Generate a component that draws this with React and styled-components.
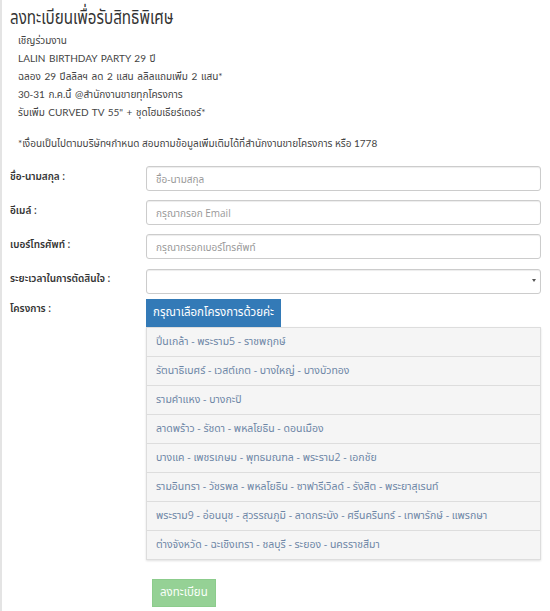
import React, { useState } from 'react';
import styled, { createGlobalStyle } from 'styled-components';

const GlobalStyle = createGlobalStyle`
  html, body {
    margin: 0;
    padding: 0;
    background: #fff;
  }
  body {
    font-family: "Open Sans", "Noto Sans Thai", "Noto Sans", sans-serif;
    color: #333;
  }
  * { box-sizing: border-box; }
`;

const projects = [
  'ปิ่นเกล้า - พระราม5 - ราชพฤกษ์',
  'รัตนาธิเบศร์ - เวสต์เกต - บางใหญ่ - บางบัวทอง',
  'รามคำแหง - บางกะปิ',
  'ลาดพร้าว - รัชดา - พหลโยธิน - ดอนเมือง',
  'บางแค - เพชรเกษม - พุทธมณฑล - พระราม2 - เอกชัย',
  'รามอินทรา - วัชรพล - พหลโยธิน - ซาฟารีเวิลด์ - รังสิต - พระยาสุเรนท์',
  'พระราม9 - อ่อนนุช - สุวรรณภูมิ - ลาดกระบัง - ศรีนครินทร์ - เทพารักษ์ - แพรกษา',
  'ต่างจังหวัด - ฉะเชิงเทรา - ชลบุรี - ระยอง - นครราชสีมา',
];

const Page = styled.div`
  min-height: 611px;
  border-left: 2px solid #e4e4e4;
  padding: 3px 9px 0 8px;
`;

const Title = styled.h1`
  margin: 0;
  font-size: 20px;
  font-weight: 400;
  line-height: 28px;
  color: #333;
  white-space: nowrap;
  transform: scaleX(0.76);
  transform-origin: left center;
`;

const Info = styled.div`
  padding: 0 0 0 8px;
  font-family: "Lato", "Noto Sans Thai", sans-serif;
  font-size: 10px;
  color: #444;
`;

const Line = styled.p`
  margin: 0;
  line-height: 18px;
  word-spacing: 1px;
`;

const Note = styled(Line)`
  margin-top: 13px;
  word-spacing: 0;
`;

const Form = styled.form`
  margin-top: 14px;
`;

const Row = styled.div`
  display: grid;
  grid-template-columns: 136px 395px;
  align-items: start;
  margin-bottom: ${(p) => p.$gap ?? 9}px;
`;

const Label = styled.label`
  font-size: 10px;
  font-weight: 600;
  color: #333;
  padding-top: ${(p) => p.$top || 3}px;
`;

const Input = styled.input`
  width: 100%;
  height: 25px;
  border: 1px solid #ccc;
  border-radius: 3px;
  box-shadow: inset 0 1px 1px rgba(0, 0, 0, 0.075);
  padding: 0 9px;
  font-family: inherit;
  font-size: 10px;
  color: #555;
  outline: none;
  &::placeholder {
    color: #999;
  }
`;

const SelectWrap = styled.div`
  position: relative;
  &::after {
    content: '';
    position: absolute;
    right: 5px;
    top: 11px;
    border-left: 2px solid transparent;
    border-right: 2px solid transparent;
    border-top: 3px solid #555;
  }
`;

const Select = styled.select`
  width: 100%;
  height: 25px;
  border: 1px solid #ccc;
  border-radius: 3px;
  box-shadow: inset 0 1px 1px rgba(0, 0, 0, 0.075);
  background: #fff;
  appearance: none;
  padding: 0 9px;
  font-family: inherit;
  font-size: 10px;
  outline: none;
`;

const PickButton = styled.button`
  display: block;
  height: 28px;
  padding: 0 7px;
  border: 0;
  border-radius: 0;
  background: #337ab7;
  color: #fff;
  font-family: inherit;
  font-size: 11.5px;
  cursor: pointer;
`;

const List = styled.ul`
  list-style: none;
  margin: 0;
  padding: 0;
  box-shadow: 0 1px 2px rgba(0, 0, 0, 0.12);
`;

const Item = styled.li`
  height: 30px;
  display: flex;
  align-items: center;
  padding: 0 9px;
  background: ${(p) => (p.$active ? '#e6eef7' : '#f5f5f5')};
  border: 1px solid #ddd;
  margin-bottom: -1px;
  font-size: 10.5px;
  color: #6d86a6;
  cursor: pointer;
  &:last-child {
    margin-bottom: 0;
  }
`;

const Submit = styled.button`
  display: block;
  margin: 19px 0 0 142px;
  height: 28px;
  padding: 0 7px;
  border: 1px solid #8ccc8c;
  border-radius: 0;
  background: #95d195;
  color: #fafffa;
  font-family: inherit;
  font-size: 11.5px;
`;

export default function App() {
  const [picked, setPicked] = useState(null);

  return (
    <>
      <GlobalStyle />
      <Page>
        <Title>ลงทะเบียนเพื่อรับสิทธิพิเศษ</Title>
        <Info>
          <Line>เชิญร่วมงาน</Line>
          <Line>LALIN BIRTHDAY PARTY 29 ปี</Line>
          <Line>ฉลอง 29 ปีลลิลฯ ลด 2 แสน ลลิลแถมเพิ่ม 2 แสน*</Line>
          <Line>30-31 ก.ค.นี้ @สำนักงานขายทุกโครงการ</Line>
          <Line>รับเพิ่ม CURVED TV 55" + ชุดโฮมเธียร์เตอร์*</Line>
          <Note>*เงื่อนเป็นไปตามบริษัทฯกำหนด สอบถามข้อมูลเพิ่มเติมได้ที่สำนักงานขายโครงการ หรือ 1778</Note>
        </Info>

        <Form onSubmit={(e) => e.preventDefault()}>
          <Row>
            <Label htmlFor="name">ชื่อ-นามสกุล :</Label>
            <Input id="name" placeholder="ชื่อ-นามสกุล" />
          </Row>
          <Row>
            <Label htmlFor="email">อีเมล์ :</Label>
            <Input id="email" placeholder="กรุณากรอก Email" />
          </Row>
          <Row>
            <Label htmlFor="tel">เบอร์โทรศัพท์ :</Label>
            <Input id="tel" placeholder="กรุณากรอกเบอร์โทรศัพท์" />
          </Row>
          <Row $gap={5}>
            <Label htmlFor="time">ระยะเวลาในการตัดสินใจ :</Label>
            <SelectWrap>
              <Select id="time" defaultValue="">
                <option value=""></option>
              </Select>
            </SelectWrap>
          </Row>
          <Row $gap={0}>
            <Label $top={2}>โครงการ :</Label>
            <div>
              <PickButton type="button">กรุณาเลือกโครงการด้วยค่ะ</PickButton>
              <List>
                {projects.map((p, i) => (
                  <Item key={p} $active={picked === i} onClick={() => setPicked(i)}>
                    {p}
                  </Item>
                ))}
              </List>
            </div>
          </Row>
          <Submit type="submit">ลงทะเบียน</Submit>
        </Form>
      </Page>
    </>
  );
}
